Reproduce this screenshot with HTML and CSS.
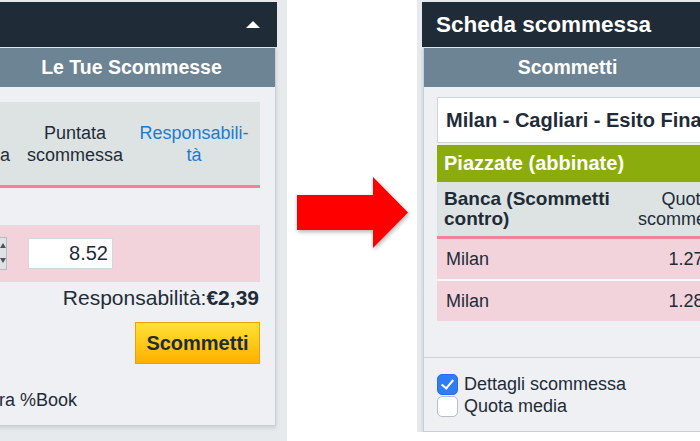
FILE: index.html
```html
<!DOCTYPE html>
<html lang="it">
<head>
  <meta charset="UTF-8">
  <meta name="viewport" content="width=device-width, initial-scale=1.0">
  <title>Scheda scommessa</title>
  <link rel="stylesheet" href="styles.css">
</head>
<body>

<div class="stage">

  <!-- before: open bets view -->
  <section class="shot shot-left">
    <div class="slip">
      <div class="slip-bar">
        <span class="slip-title">Scheda scommessa</span>
        <span class="caret"></span>
      </div>
      <div class="card">
        <div class="tabs">
          <div class="tab">Scommetti</div>
          <div class="tab">Le Tue Scommesse</div>
        </div>
        <div class="card-body body-open">
          <div class="grid grid-head">
            <div class="cell">Selezione</div>
            <div class="cell c">Quota<br>scommessa</div>
            <div class="cell c">Puntata<br>scommessa</div>
            <div class="cell c link">Responsabili-<br>tà</div>
          </div>
          <div class="grid bet-row">
            <div class="cell">Milan</div>
            <div class="odds">
              <input class="field odds-field" value="1.27">
              <span class="spin"><i class="up"></i><i class="down"></i></span>
            </div>
            <div><input class="field stake" value="8.52"></div>
            <div></div>
          </div>
          <div class="liability">Responsabilità:<b>€2,39</b></div>
          <div class="actions">
            <button class="btn">Scommetti</button>
          </div>
          <div class="options options-row">
            <label class="opt"><span class="check on"></span>Dettagli scommessa</label>
            <label class="opt"><span class="check"></span>Mostra %Book</label>
          </div>
        </div>
      </div>
    </div>
  </section>

  <div class="between">
    <svg class="arrow" width="111" height="71" viewBox="0 0 111 71">
      <polygon points="0,18 76,18 76,0 111,35.5 76,71 76,53 0,53" fill="#ff0000"/>
    </svg>
  </div>

  <!-- after: bet slip view -->
  <section class="shot shot-right">
    <div class="slip">
      <div class="slip-bar">
        <span class="slip-title">Scheda scommessa</span>
        <span class="caret"></span>
      </div>
      <div class="card">
        <div class="tabs">
          <div class="tab">Scommetti</div>
          <div class="tab">Le Tue Scommesse</div>
        </div>
        <div class="card-body body-bet">
          <div class="select">Milan - Cagliari - Esito Finale</div>
          <div class="group">Piazzate (abbinate)</div>
          <div class="bgrid bhead">
            <div class="bcell strong">Banca (Scommetti contro)</div>
            <div class="bcell c">Quota<br>scommessa</div>
            <div class="bcell c">Puntata<br>scommessa</div>
          </div>
          <div class="bgrid brow">
            <div class="bcell">Milan</div>
            <div class="bcell c">1.27</div>
            <div class="bcell c">8.52</div>
          </div>
          <div class="bgrid brow">
            <div class="bcell">Milan</div>
            <div class="bcell c">1.28</div>
            <div class="bcell c">2.00</div>
          </div>
        </div>
        <div class="foot">
          <div class="options options-col">
            <label class="opt"><span class="check on"></span>Dettagli scommessa</label>
            <label class="opt"><span class="check"></span>Quota media</label>
          </div>
        </div>
      </div>
    </div>
  </section>

</div>

</body>
</html>
```

FILE: styles.css
```css
* {
  box-sizing: border-box;
}
body {
  margin: 0;
  background: #fff;
  font-family: "Liberation Sans", Arial, sans-serif;
  color: #1f2c38;
  overflow: hidden;
}
.stage {
  display: flex;
  width: 700px;
  height: 441px;
}
.shot {
  display: flex;
  background: #e7eaed;
  overflow: hidden;
}
.shot-left {
  width: 287px;
  padding: 2px 10px 0 0;
  justify-content: flex-end;
}
.shot-right {
  flex: 1;
  align-self: flex-start;
  padding: 2px 0 0 5px;
}
.slip {
  width: 578px;
  flex-shrink: 0;
}
.slip-bar {
  height: 45px;
  background: #1f2c38;
  display: flex;
  align-items: center;
  justify-content: space-between;
  padding: 0 17px 0 14px;
}
.slip-title {
  color: #fff;
  font-weight: bold;
  font-size: 22.5px;
}
.caret {
  width: 0;
  height: 0;
  border-left: 7px solid transparent;
  border-right: 7px solid transparent;
  border-bottom: 7px solid #fff;
}
.card {
  margin: 0 1px;
  border: 1px solid #c5d0da;
  border-top: 1px solid #dfe4e9;
  background: #eef0f4;
  box-shadow: 0 2px 4px rgba(0, 0, 0, 0.12);
}
.tabs {
  display: flex;
  height: 39px;
}
.tab {
  flex: 1;
  display: flex;
  align-items: center;
  justify-content: center;
  background: #6d8494;
  color: #fff;
  font-weight: bold;
  font-size: 19.5px;
}
.c {
  text-align: center;
}
.link {
  color: #1b7bd3;
}

/* open bets */
.body-open {
  padding: 15px 15px 14px;
  font-size: 18px;
}
.grid {
  display: grid;
  grid-template-columns: 1fr 120px 106px 132px;
  align-items: center;
}
.grid-head {
  height: 86px;
  background: #dde3e3;
  border-bottom: 3px solid #f2829a;
  line-height: 22px;
}
.cell {
  padding: 0 8px;
}
.grid-head .c {
  padding: 0;
}
.bet-row {
  margin-top: 37px;
  height: 57px;
  background: #f2d3db;
}
.odds {
  display: flex;
  justify-content: flex-end;
  padding-right: 15px;
}
.field {
  width: 85px;
  height: 31px;
  border: 1px solid #d3d8dc;
  background: #fff;
  font-family: inherit;
  font-size: 20px;
  color: #1f2c38;
  text-align: right;
  padding: 0 4px;
}
.odds-field {
  width: 62px;
}
.spin {
  width: 9px;
  height: 33px;
  margin-top: -1px;
  border: 1px solid #b7bdc2;
  background: #dfe2e5;
  display: flex;
  flex-direction: column;
  align-items: center;
  justify-content: space-around;
}
.spin i {
  width: 0;
  height: 0;
  border-left: 3px solid transparent;
  border-right: 3px solid transparent;
}
.spin .up {
  border-bottom: 5px solid #4a5560;
}
.spin .down {
  border-top: 5px solid #4a5560;
}
.stake {
  margin-left: 6px;
}
.liability {
  text-align: right;
  font-size: 21px;
  line-height: 24px;
  margin-top: 4px;
  padding-right: 1px;
}
.actions {
  display: flex;
  justify-content: flex-end;
  margin-top: 12px;
}
.btn {
  width: 125px;
  height: 42px;
  border: 1px solid #f0a000;
  background: linear-gradient(#ffe236, #ffb000);
  font-family: inherit;
  font-weight: bold;
  font-size: 20px;
  color: #1f2c38;
  cursor: pointer;
}
.options {
  display: flex;
  font-size: 18px;
  line-height: 22px;
}
.options-row {
  gap: 28px;
  margin-top: 25px;
}
.options-col {
  flex-direction: column;
}
.opt {
  display: flex;
  align-items: center;
  gap: 6px;
}
.check {
  width: 21px;
  height: 21px;
  border-radius: 5px;
  border: 1px solid #b9bdc2;
  background: #fff;
  position: relative;
}
.check.on {
  background: #2f7cf6;
  border-color: #2a6fe0;
}
.check.on::after {
  content: "";
  position: absolute;
  left: 6px;
  top: 2px;
  width: 5px;
  height: 10px;
  border-right: 2px solid #fff;
  border-bottom: 2px solid #fff;
  transform: rotate(40deg);
}

/* bet slip */
.body-bet {
  padding: 10px 13px 36px;
  font-size: 18px;
}
.select {
  height: 46px;
  border: 1px solid #cdd4da;
  background: #fff;
  display: flex;
  align-items: center;
  padding-left: 8px;
  font-weight: bold;
  font-size: 20px;
  white-space: nowrap;
}
.group {
  margin-top: 2px;
  height: 37px;
  display: flex;
  align-items: center;
  padding-left: 7px;
  background: #8cac0d;
  color: #fff;
  font-weight: bold;
  font-size: 20px;
}
.bgrid {
  display: grid;
  grid-template-columns: 190px 118px 1fr;
  align-items: center;
}
.bhead {
  height: 57px;
  background: #dde3e3;
  border-bottom: 3px solid #f2829a;
  line-height: 20px;
}
.bcell {
  padding: 0 9px;
}
.strong {
  font-weight: bold;
  font-size: 19px;
  padding-left: 7px;
}
.brow {
  height: 40px;
  background: #f2d3db;
}
.brow + .brow {
  height: 42px;
  border-top: 2px solid #f7f8fa;
}
.foot {
  border-top: 1px solid #c8d2dc;
  padding: 15px 13px 14px;
}

.between {
  width: 130px;
  display: flex;
  justify-content: center;
  align-items: flex-start;
  padding-top: 177px;
}
.arrow {
  filter: drop-shadow(1px 2px 2px rgba(0, 0, 0, 0.3));
}
```
